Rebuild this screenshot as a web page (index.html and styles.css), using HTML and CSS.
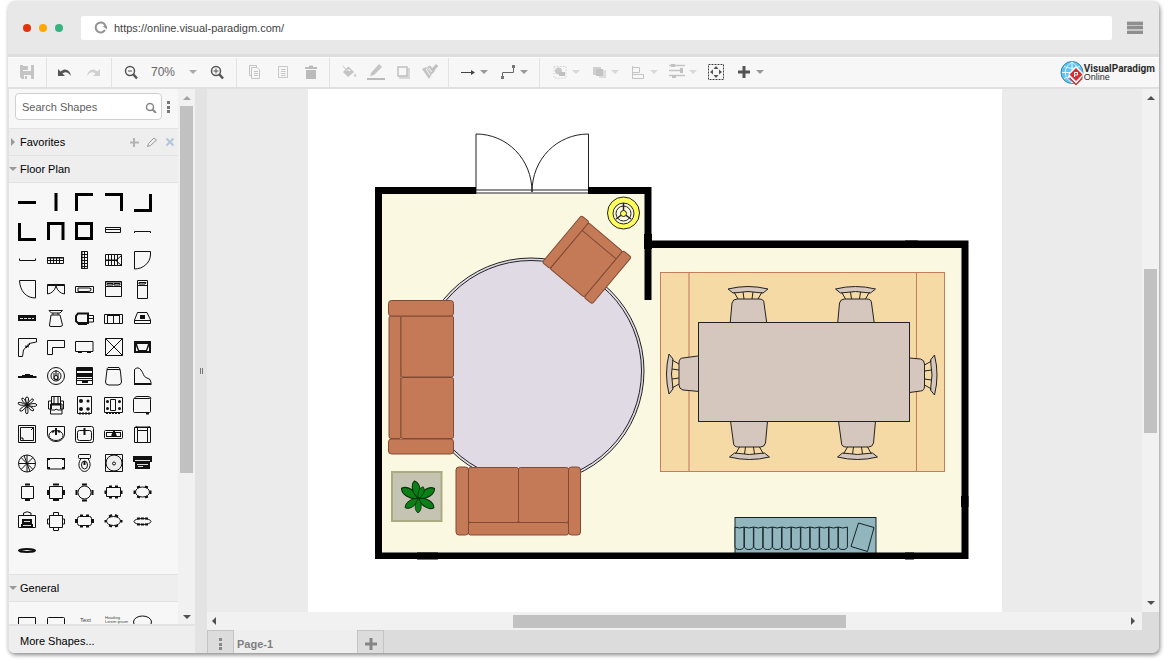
FILE: index.html
```
<!DOCTYPE html>
<html lang="en">
<head>
    <meta charset="utf-8">
    <title>Floor Plan - Visual Paradigm Online</title>
    <link rel="stylesheet" href="styles.css">
</head>
<body>
<div class="window">
    <header class="browser-bar">
        <div class="dots"><span class="dot red"></span><span class="dot yellow"></span><span class="dot green"></span></div>
        <div class="address">
            <button class="plain" aria-label="Reload">
                <svg width="13" height="13" viewBox="0 0 13 13"><path d="M11.500 5A5 5 0 1 0 11 9" fill="none" stroke="#949494" stroke-width="2"/><path d="M8.500 5H13V8.500z" fill="#949494"/></svg>
            </button>
            <input class="url" type="text" aria-label="Address" value="https://online.visual-paradigm.com/">
        </div>
        <button class="plain" aria-label="Menu">
            <svg width="16" height="13" viewBox="0 0 16 13"><path d="M0 0H16V13H0z" fill="#c6c6c6"/><path d="M0 1H16V4H0zM0 5H16V8H0zM0 10H16V13H0z" fill="#8e8e8e"/></svg>
        </button>
    </header>

    <div class="toolbar">
        <div class="group">
            <button class="tool" aria-label="Save"><svg width="16" height="16" viewBox="0 0 16 16"><path d="M1 1H15V15H3L1 13z" fill="#c4c4c4"/><path d="M4 1H12V7H4zM5 11H12V15H5z" fill="#f7f7f7"/><path d="M4 2H9V6H4zM6 12H8V15H6z" fill="#c4c4c4"/></svg></button>
        </div>
        <div class="group tight">
            <button class="tool" aria-label="Undo"><svg width="16" height="16" viewBox="0 0 16 16"><path d="M1 5V12H8L5.500 9.500Q10 6 14 12Q13 5 7 5.500L3.500 7.500z" fill="#555"/></svg></button>
            <button class="tool" aria-label="Redo"><svg width="16" height="16" viewBox="0 0 16 16"><path d="M15 5V12H8L10.500 9.500Q6 6 2 12Q3 5 9 5.500L12.500 7.500z" fill="#d0d0d0"/></svg></button>
        </div>
        <div class="group">
            <button class="tool" aria-label="Zoom out"><svg width="16" height="16" viewBox="0 0 16 16"><circle cx="7" cy="7" r="4.500" fill="none" stroke="#555" stroke-width="1.500"/><path d="M10 10L14 14.500" stroke="#555" stroke-width="2.500"/><path d="M5 7H9" stroke="#555"/></svg></button>
            <label class="zoom"><select aria-label="Zoom level"><option>70%</option><option>100%</option></select><span class="caret"></span></label>
            <button class="tool" aria-label="Zoom in"><svg width="16" height="16" viewBox="0 0 16 16"><circle cx="7" cy="7" r="4.500" fill="none" stroke="#555" stroke-width="1.500"/><path d="M10 10L14 14.500" stroke="#555" stroke-width="2.500"/><path d="M4.500 7H9.500M7 4.500V9.500" stroke="#555"/></svg></button>
        </div>
        <div class="group tight">
            <button class="tool" aria-label="Copy"><svg width="16" height="16" viewBox="0 0 16 16" fill="none" stroke="#c4c4c4"><path d="M4.500 11.500H2.500V1.500H9.500V3M4.500 3.500H10L12.500 6V14.500H4.500zM7 7.500H11M7 9.500H11M7 11.500H11"/></svg></button>
            <button class="tool" aria-label="Paste"><svg width="16" height="16" viewBox="0 0 16 16" fill="none" stroke="#c8c8c8"><path d="M3.500 2.500H12.500V13.500H3.500zM6 5.500H10.500M6 7.500H10.500M6 9.500H10.500M6 11.500H10.500"/></svg></button>
            <button class="tool" aria-label="Delete"><svg width="16" height="16" viewBox="0 0 16 16" fill="#bbb"><path d="M2 3H6V1.500H10V3H14V5H2zM3 6H13V15H3z"/></svg></button>
        </div>
        <div class="group narrow">
            <button class="tool" aria-label="Fill colour"><svg width="16" height="16" viewBox="0 0 16 16"><path d="M2 8L7.500 2.500L13 8L7 13z" fill="#c4c4c4"/><path d="M5 7L7.500 4.500L10 7z" fill="#f7f7f7"/><path d="M1.500 2L6 6M7 3V7" stroke="#c4c4c4" fill="none"/><path d="M14 9Q17 13 14 13Q11.500 13 14 9z" fill="#d4d4d4"/></svg></button>
            <button class="tool" aria-label="Line colour"><svg width="18" height="18" viewBox="0 0 18 18"><path d="M4 10L12 1L15 4L7 12L3 13z" fill="#c4c4c4"/><path d="M0 15H18V17H0z" fill="#bbb"/></svg></button>
            <button class="tool" aria-label="Shadow"><svg width="16" height="16" viewBox="0 0 16 16"><path d="M4 4H15V15H4z" fill="#d8d8d8"/><path d="M3 3H12V12H3z" fill="#f7f7f7" stroke="#c0c0c0" stroke-width="1.500"/></svg></button>
            <button class="tool" aria-label="Copy style"><svg width="16" height="16" viewBox="0 0 16 16"><path d="M0 5L4 3L10 10L7 15zM5 3L8 1.500L13 7L10 10z" fill="#c4c4c4"/><path d="M9 8L15 1" stroke="#c0c0c0" stroke-width="3"/><path d="M4 5L8 11M7 4L10 8" stroke="#f7f7f7"/></svg></button>
        </div>
        <div class="group">
            <button class="tool split" aria-label="Connection"><svg width="16" height="16" viewBox="0 0 16 16"><path d="M1 8.500H13" stroke="#444"/><path d="M11 6L15 8.500L11 11z" fill="#444"/></svg><span class="caret dark"></span></button>
            <button class="tool split" aria-label="Waypoints"><svg width="16" height="16" viewBox="0 0 16 16"><path d="M2.500 13V8.500H13.500V3" fill="none" stroke="#666"/><path d="M1 12H4V15H1zM12 1H15V4H12z" fill="#777"/></svg><span class="caret dark"></span></button>
        </div>
        <div class="group last">
            <button class="tool split" aria-label="Group"><svg width="16" height="16" viewBox="0 0 16 16"><path d="M2 2.500H14V14H2z" fill="none" stroke="#d0d0d0" stroke-dasharray="1.500 1.500"/><circle cx="6.500" cy="7" r="3.500" fill="#c8c8c8"/><path d="M7 8H13V12H7z" fill="#c0c0c0"/></svg><span class="caret light"></span></button>
            <button class="tool split" aria-label="Arrange"><svg width="16" height="16" viewBox="0 0 16 16"><path d="M2 3H10V11H2z" fill="#d0d0d0"/><path d="M8 6H15V14H8z" fill="#dedede"/><path d="M5 5H12V12H5z" fill="#c4c4c4"/></svg><span class="caret light"></span></button>
            <button class="tool split" aria-label="Align"><svg width="16" height="16" viewBox="0 0 16 16" fill="none" stroke="#c4c4c4"><path d="M2.500 2V15M2.500 3.500H9.500V8.500H2.500M2.500 10.500H13.500V14.500H2.500"/></svg><span class="caret light"></span></button>
            <button class="tool split" aria-label="Distribute"><svg width="16" height="16" viewBox="0 0 16 16"><path d="M0 1.500H16M0 6.500H14M0 11.500H16" stroke="#c4c4c4" stroke-width="1.500"/><path d="M2 0H6V3H2zM11 4H14V9H11zM3 11H7V14H3z" fill="#c0c0c0"/></svg><span class="caret light"></span></button>
            <button class="tool" aria-label="Fit"><svg width="16" height="16" viewBox="0 0 16 16"><path d="M.5 .5H15.500V15.500H.5z" fill="none" stroke="#444" stroke-dasharray="2 1"/><path d="M8 2L10.500 5H5.500zM8 14L5.500 11H10.500zM2 8L5 5.500V10.500zM14 8L11 10.500V5.500z" fill="#555"/></svg></button>
            <button class="tool split" aria-label="Insert"><svg width="16" height="16" viewBox="0 0 16 16"><path d="M6.500 2H9.500V6.500H14V9.500H9.500V14H6.500V9.500H2V6.500H6.500z" fill="#555"/></svg><span class="caret dark"></span></button>
        </div>
        <a class="brand" href="#" aria-label="Visual Paradigm Online">
            <svg width="24" height="26" viewBox="0 0 24 26">
                <circle cx="12" cy="12.500" r="11" fill="#5cc3f2" stroke="#3a86a8"/>
                <path d="M12 2V23M2 12.500H22M12 2C3 8 3 17 12 23M12 2C21 8 21 17 12 23M4 6.500Q12 10 20 6.500M4 18.500Q12 15 20 18.500" fill="none" stroke="#e8f8ff"/>
                <path d="M16 6L24 14L16 25L8 17L9 13z" fill="#f7f7f7"/>
                <path d="M16 8L22.500 14.500L16 21L9.500 14.500zM9.500 17L16 23.500L22.500 17V19L16 25.500L9.500 19z" fill="#d22f35"/>
                <path d="M14.500 17V12.500H17.500V15H15" fill="none" stroke="#fff"/>
            </svg>
            <span class="brand-name"><b>VisualParadigm</b>Online</span>
        </a>
    </div>

    <div class="workspace">
        <aside class="sidebar">
            <div class="sidebar-main">
                <div class="panels">
                    <div class="search-row">
                        <div class="search">
                            <input type="text" aria-label="Search Shapes" placeholder="Search Shapes">
                            <svg width="12" height="12" viewBox="0 0 12 12"><circle cx="5" cy="6" r="3.500" fill="none" stroke="#888" stroke-width="1.500"/><path d="M7.500 8.500L11 12" stroke="#888" stroke-width="2"/></svg>
                        </div>
                        <button class="plain" aria-label="More options"><svg width="4" height="14" viewBox="0 0 4 14" fill="#777"><path d="M0 1H3V4H0zM0 6H3V9H0zM0 10H3V13H0z"/></svg></button>
                    </div>
                    <div class="section-row">
                        <button class="section"><span class="arrow-right"></span>Favorites</button>
                        <button class="plain" aria-label="Add"><svg width="10" height="10" viewBox="0 0 10 10"><path d="M5 1V10M1 5.500H10" stroke="#b4b4b4" stroke-width="2"/></svg></button>
                        <button class="plain" aria-label="Edit"><svg width="10" height="10" viewBox="0 0 10 10"><path d="M.5 9.500L1.500 6.500L7 1L9.500 3L3.500 8.500z" fill="none" stroke="#999"/></svg></button>
                        <button class="plain" aria-label="Remove"><svg width="10" height="10" viewBox="0 0 10 10"><path d="M1.500 1.500L8.500 8.500M8.500 1.500L1.500 8.500" stroke="#b3c5d9" stroke-width="2"/></svg></button>
                    </div>
                    <button class="section wide"><span class="arrow-down"></span>Floor Plan</button>
                    <div class="palette">
                        <!-- walls -->
                        <svg><path class="thick" d="M5 14.500H23"/></svg>
                        <svg><path class="thick" d="M14 5V23"/></svg>
                        <svg><path class="thick" d="M5.500 23V6.500H22"/></svg>
                        <svg><path class="thick" d="M5 6.500H21.500V23"/></svg>
                        <svg><path class="thick" d="M21.500 6V22.500H5"/></svg>
                        <svg><path class="thick" d="M6.500 6V22.500H23"/></svg>
                        <svg><path class="thick" d="M6.500 23V6.500H21V23"/></svg>
                        <svg><path class="thick" d="M5.500 6.500H20.500V21.500H5.500z"/></svg>
                        <svg><path d="M5.500 10.500H20.500V15.500H5.500zM5 12.500H21"/></svg>
                        <svg><path d="M5.500 16V14.500H21.500V16"/></svg>
                        <svg><path d="M6.500 12.500V14.500H22.500V12.500"/></svg>
                        <svg><path d="M5.500 11.500H21.500V17.500H5.500zM5 14.500H22M5 12H22M8.500 11V18M11.500 11V18M14.500 11V18M17.500 11V18"/></svg>
                        <svg><path d="M10.500 5.500H16.500V22.500H10.500zM13.500 5V23M11 5V23M10 8.500H17M10 11.500H17M10 14.500H17M10 17.500H17M10 20.500H17"/></svg>
                        <svg><path d="M5.500 8.500H21.500V19.500H5.500zM5 14.500H18M8.500 8V20M11.500 8V20M14.500 8V20M17.500 8V20M22 9L16 14.500L22 20M5 14H17"/></svg>
                        <svg><path d="M5.500 23V5.500H21.500V9C21 17 14 23 5.500 23z"/></svg>
                        <svg><path d="M6.500 5.500H22.500V23C13 23 7 16 6.500 5.500z"/></svg>
                        <svg><path d="M5.500 11V9.500H22.500V19Q16 18 14 11Q12 18 5.500 19V10M5 10.500H23"/></svg>
                        <svg><path d="M4.500 11.500H22.500V17.500H4.500zM7 13H18Q21 13 20 15Q20 16.500 17 16.500H7z"/></svg>
                        <svg><path d="M5.500 6.500H21.500V21.500H5.500zM5 11.500H22M7 8.500H13V10H7zM14 8.500H20V10H14zM5 7H22"/></svg>
                        <svg><path d="M8.500 5.500H18.500V23.500H8.500zM8 10.500H19M10 7.500H17L16 9H10z"/></svg>
                        <svg><path class="solid" d="M5 11H23V17H5z"/><path class="gap" d="M7 14.500H21" stroke-dasharray="3 1"/></svg>
                        <svg><path d="M7 6.500H20.500L18 9H9.500zM9 11H18L20.500 21Q20.500 22.500 18 22.500H9Q7 22.500 7.500 21zM11 9V11M16 9V11"/></svg>
                        <svg><path class="mid" d="M7 9.500H17V19H7L5 17V12z"/><path d="M17 11.500H22.500V18H17M18 14.500H23M7 20.500H16"/></svg>
                        <svg><path d="M4.500 10.500H22.500V19.500H4.500zM7.500 10V19M19.500 10V19M13.500 12V19M7 11.500H20"/></svg>
                        <svg><path d="M8.500 8.500H18L21.500 16V19.500H5.500V16zM5 16.500H22"/><path class="solid" d="M11 11H16V15H11z"/></svg>
                        <svg><path d="M5.500 5.500H23.500V9L16 10.500L10.500 17L9.500 23.500H5.500zM13 15L17 11M12 13L16 14"/></svg>
                        <svg><path d="M5.500 7.500H22.500V14.500H10.500V21.500H5.500z"/></svg>
                        <svg><path d="M4.500 8.500H22V18.500H4.500z"/><path class="solid" d="M7 18H11V20H7zM16 18H20V20H16z"/></svg>
                        <svg><path d="M5.500 5.500H22.500V22.500H5.500zM5.500 5.500L22.500 22.500M22.500 5.500L5.500 22.500"/></svg>
                        <svg><path class="solid" d="M5 8H22V20H5z"/><path class="fillw" d="M8 11H19L17 17H10zM7 13L9 18H7zM20 13V18H18z"/></svg>
                        <!-- furniture -->
                        <svg><path class="mid" d="M5 15H23.500"/><path d="M9 13.500H20M12 12.500H17"/></svg>
                        <svg><circle cx="14" cy="14" r="8.500"/><circle cx="14" cy="14" r="5"/><circle cx="14" cy="15.500" r="2"/><path d="M14 8V14M12 11V17L16 18V11"/></svg>
                        <svg><path d="M5.500 5.500H21.500V22.500H5.500zM5 16.500H22M5 18.500H22"/><path class="solid" d="M5 6H22V9H5zM5 11H22V15H5zM11 19H17V21H11z"/></svg>
                        <svg><path d="M8 5.500H19Q20 6 20.500 10L21.500 20Q21 23 18 23H9Q5.500 23 5.500 20L7 8Q7 6 8 5.500zM7 7.500H20"/></svg>
                        <svg><path d="M5.500 23V7.500Q9 4 12 8C15 12 14 14 17 15.500Q22.500 17 22 20.500V23"/><path class="mid" d="M5 22H22"/></svg>
                        <svg><path d="M14 14Q11 6 14 6Q17 6 14 14Q18 7 20 8Q22 10 14 14Q23 11 24 14Q22 17 14 14Q23 18 20 20Q17 20 14 14Q16 22 14 23Q11 22 14 14Q10 21 7 20Q6 17 14 14Q5 15 5 12Q6 10 14 14Q8 10 9 7Q12 7 14 14"/></svg>
                        <svg><path d="M9.500 5.500H18.500V13H9.500zM12 5V13M16 5V13M6.500 10H9.500V18H6.500zM18.500 10H21.500V18H18.500zM8.500 13H20V23H8.500zM9 19H13L14 18L16 19H20"/><path class="mid" d="M9 13.500H19"/></svg>
                        <svg><path d="M6.500 5.500H20.500V22.500H6.500z"/><g class="solid"><circle cx="10" cy="10" r="2"/><circle cx="17" cy="10" r="1.500"/><circle cx="10" cy="18" r="2"/><circle cx="17" cy="18" r="1.800"/></g><path class="mid" d="M8 22.500H20" stroke-dasharray="2 1"/></svg>
                        <svg><path d="M4.500 6.500H22.500V21.500H4.500zM10.500 8.500H15.500V19.500H10.500z"/><g class="solid"><circle cx="7.500" cy="10.500" r="1.500"/><circle cx="19.500" cy="10.500" r="1.500"/><circle cx="7.500" cy="17.500" r="1.500"/><circle cx="19.500" cy="17.500" r="1.500"/></g><path class="mid" d="M6 22H21" stroke-dasharray="2 1"/></svg>
                        <svg><rect x="4.500" y="7.500" width="17" height="14" rx="1"/><path d="M5 8Q6 5.500 8 5.500H19Q22 5.500 22 8"/><path class="mid" d="M17 22.500H20"/></svg>
                        <!-- bathroom and kitchen -->
                        <svg><path d="M5.500 5.500H22.500V22.500H5.500zM7.500 7.500H20.500V20.500H7.500zM18 10L21 7M8 18H10V20"/></svg>
                        <svg><path d="M5.500 6.500H22.500V14C22 24 6 24 5.500 14z"/><ellipse cx="14" cy="15.500" rx="7" ry="5"/><path class="mid" d="M14 8V15M10 12L12 11M18 12L16 11"/></svg>
                        <svg><rect x="4.500" y="6.500" width="18" height="16" rx="2"/><rect x="6.500" y="10.500" width="14" height="10" rx="2"/><path class="mid" d="M13.500 8V15"/></svg>
                        <svg><rect x="4.500" y="10.500" width="18" height="8" rx="1"/><rect x="6.500" y="12.500" width="14" height="4"/><path class="mid" d="M14 10V16M12 16L14 12L16 16"/></svg>
                        <svg><path d="M5.500 7.500H21.500V22.500H5.500zM8.500 10.500H18.500V22M8.500 7V22M18.500 7V22M5.500 8Q7 5.500 9 7H19Q21 5.500 21.500 8"/></svg>
                        <svg><circle cx="14" cy="14.500" r="8.500"/><path d="M14 6V23M5.500 14.500H22.500M8 8.500L20 20.500M20 8.500L8 20.500M11 6.500L17 22.500"/></svg>
                        <svg><path d="M5.500 9.500H22.500V20H5.500z"/><path class="solid" d="M5 9H8V11H5zM20 9H23V11H20zM5 18H8V20H5zM20 18H23V20H20z"/></svg>
                        <svg><rect x="7.500" y="5.500" width="12" height="4" rx="1"/><path d="M10 9.500C5 17 10 22.500 13.500 22.500C17 22.500 22 17 17 9.500"/><ellipse cx="13.500" cy="16" rx="3" ry="4"/><path class="mid" d="M13.500 12V16"/></svg>
                        <svg><path d="M5.500 5.500H22.500V22.500H5.500z"/><circle cx="14" cy="14" r="8" fill="#eee"/><circle cx="14" cy="14.500" r="1.500"/></svg>
                        <svg><path class="solid" d="M4 7H23V13H21V20H6V13H4z"/><path class="gap" d="M6 11.500H21M8 15.500H19M9 17.500H14"/></svg>
                        <!-- tables -->
                        <svg><path d="M8.500 8.500H20.500V20.500H8.500z"/><path class="mid" d="M12 6.500H17M12 22H17"/></svg>
                        <svg><path d="M7.500 8.500H20.500V20.500H7.500z"/><path class="mid" d="M11 6.500H17M11 22H17M6 12V17M22 12V17"/></svg>
                        <svg><circle cx="13.500" cy="14.500" r="6.500"/><path class="mid" d="M11 6.500H16M11 22.500H16M5.500 12V17M21.500 12V17"/></svg>
                        <svg><path d="M6.500 9.500H20.500V18.500H6.500z"/><path class="mid" d="M9 8.500H12M15 8.500H18M9 19.500H12M15 19.500H18M5.500 12.500V16M21.500 12.500V16"/></svg>
                        <svg><ellipse cx="13.500" cy="14" rx="7" ry="5"/><path class="mid" d="M8 9.500L11 8.500M16 8.500L19 9.500M8 18.500L11 19.500M16 19.500L19 18.500M5.500 12.500V16M21.500 12.500V16"/></svg>
                        <svg><path d="M5.500 8.500H22.500V20.500H5.500zM10.500 8.500V6Q14 3.500 18 6V8.500"/><path class="solid" d="M9 12H19V17H20V21H8V17H9z"/><path class="gap" d="M11 14.500H17M10 18.500H18"/></svg>
                        <svg><path d="M7.500 8.500H20.500V20.500H7.500zM11.500 8V5.500H16.500V8M11.500 21V23.500H16.500V21M7 12H5.500V17H7M21 12H22.500V17H21"/></svg>
                        <svg><rect x="6.500" y="9.500" width="14" height="9" rx="2"/><path class="mid" d="M9 8.500H12M15 8.500H18M9 19.500H12M15 19.500H18M5 12V16M22 12V16"/></svg>
                        <svg><ellipse cx="13.500" cy="14" rx="7" ry="4.500"/><path class="mid" d="M9 9.500L12 8M15 8L18 9.500M9 18.500L12 19.500M15 19.500L18 18.500M5.500 13V15.500M21.500 13V15.500"/></svg>
                        <svg><ellipse cx="13.500" cy="14.500" rx="8.500" ry="3"/><path class="mid" d="M8 11.500L19 11.500M8 17.500L19 17.500" stroke-dasharray="3 1"/></svg>
                        <svg><ellipse class="mid" cx="14" cy="14.500" rx="8" ry="1.500"/></svg>
                    </div>
                    <button class="section wide"><span class="arrow-down"></span>General</button>
                    <div class="palette general">
                        <svg><path d="M5.500 10.500H22.500V22H5.500z"/></svg>
                        <svg><rect x="5.500" y="10.500" width="17" height="12" rx="1"/></svg>
                        <span class="mini">Text</span>
                        <span class="mini heading">Heading<br>Lorem ipsum</span>
                        <svg><ellipse cx="13.500" cy="15" rx="9" ry="6"/></svg>
                    </div>
                </div>
                <div class="vbar">
                    <span class="up"></span>
                    <span class="track"><span class="thumb side-thumb"></span><span class="side-rest"></span></span>
                    <span class="down"></span>
                </div>
            </div>
            <button class="more">More Shapes...</button>
        </aside>
        <div class="splitter"><svg width="4" height="6" viewBox="0 0 4 6"><path d="M1.500 0V6M3.500 0V6" stroke="#777"/></svg></div>
        <main class="editor">
            <div class="canvas-row">
                <div class="canvas">
                    <svg class="sheet" viewBox="308 89 694 523" role="img" aria-label="Floor plan drawing">
                        <defs>
                            <g id="chair" stroke="#222">
                                <path d="M-20 -34Q0 -39 20 -34L15 -30Q0 -33 -15 -30z"/>
                                <path d="M-14 -31L-10 -24M-5 -31L-4 -24M5 -31L4 -24M14 -31L10 -24" fill="none"/>
                                <path d="M-18 2L-16 -20Q-15 -24 -11 -24H11Q16 -24 16 -20L19 2z"/>
                            </g>
                            <path id="leaf" d="M0 0C-5 -6 -5 -15 0 -18C5 -15 5 -6 0 0z"/>
                            <path id="book" d="M0 0Q4.500 2 9 0V19Q9 22.500 4.500 22.500Q0 22.500 0 19z"/>
                        </defs>
                        <path d="M378 190H648V244H965V556H378z" fill="#fbf8e2"/>
                        <!-- double door -->
                        <path d="M476 189H588V193.500H476z" fill="#fff"/>
                        <path d="M476 193.500V134C507 134 532 159 532 192C532 159 557 134 588.500 134V193.500M476 190H588M476 193H588" fill="none" stroke="#222"/>
                        <!-- round rug -->
                        <circle cx="531" cy="371" r="113" fill="#dfdae4" stroke="#222"/>
                        <circle cx="531" cy="371" r="110.500" fill="none" stroke="#222"/>
                        <!-- lamp -->
                        <g stroke="#222">
                            <circle cx="623.500" cy="213" r="16" fill="#ffff5c"/>
                            <circle cx="623.500" cy="213.500" r="10.500" fill="#fbf8e2"/>
                            <circle cx="623.500" cy="213.500" r="7.500" fill="#fbf8e2"/>
                            <path d="M623.500 213.500V203M623.500 213.500L616 219M623.500 213.500L631 219" stroke-width="1.500"/>
                            <circle cx="623.500" cy="213.500" r="3" fill="#ffff5c"/>
                        </g>
                        <!-- sofas and armchair -->
                        <g fill="#c47a57" stroke="#804a34">
                            <rect x="389" y="316" width="12" height="122.500" rx="2"/>
                            <rect x="401" y="316" width="52.500" height="61" rx="2"/>
                            <rect x="401" y="377.500" width="52.500" height="61" rx="2"/>
                            <rect x="388.500" y="300.500" width="65" height="15.500" rx="3"/>
                            <rect x="388.500" y="439" width="65" height="15" rx="3"/>
                            <rect x="468.500" y="522.500" width="100" height="12.500" rx="2"/>
                            <rect x="468.500" y="467.500" width="50" height="55" rx="2"/>
                            <rect x="518.500" y="467.500" width="50" height="55" rx="2"/>
                            <rect x="456" y="467" width="12.500" height="68" rx="3"/>
                            <rect x="568.500" y="467" width="12" height="68" rx="3"/>
                            <g transform="translate(581.500 215.500) rotate(40)">
                                <rect x="10" y="1" width="44.500" height="60" rx="2"/>
                                <path d="M10 11H54.500"/>
                                <rect width="10" height="61" rx="2"/>
                                <rect x="54.500" width="10.500" height="61" rx="2"/>
                            </g>
                        </g>
                        <!-- plant -->
                        <rect x="392" y="472" width="49.500" height="49" fill="#c5c3b1" stroke="#abaa80" stroke-width="2"/>
                        <g fill="#0b8016" stroke="#082d0a" transform="translate(418.500 498.500)">
                            <use href="#leaf" transform="rotate(-59) scale(1.100)"/>
                            <use href="#leaf" transform="rotate(-13)"/>
                            <use href="#leaf" transform="rotate(58) scale(1.050)"/>
                            <use href="#leaf" transform="rotate(121)"/>
                            <use href="#leaf" transform="rotate(235) scale(.9)"/>
                            <use href="#leaf" transform="rotate(182) scale(.8)"/>
                            <use href="#leaf" transform="rotate(22) scale(.7)"/>
                        </g>
                        <!-- dining set -->
                        <rect x="660.500" y="272.500" width="284" height="199" fill="#f6daa6" stroke="#c37c5c"/>
                        <path d="M689 273V471" stroke="#dba781" stroke-width="2"/>
                        <path d="M916.500 273V471" stroke="#c37c5c"/>
                        <g fill="#d5c7bd">
                            <use href="#chair" transform="translate(748 323)"/>
                            <use href="#chair" transform="translate(855.500 323)"/>
                            <use href="#chair" transform="translate(749.500 423) rotate(180)"/>
                            <use href="#chair" transform="translate(857.500 423) rotate(180)"/>
                            <use href="#chair" transform="translate(703 374) rotate(-90)"/>
                            <use href="#chair" transform="translate(900.500 375) rotate(90)"/>
                            <rect x="698.500" y="322.500" width="211" height="99" stroke="#222"/>
                        </g>
                        <!-- bookshelf -->
                        <g fill="#92b6be" stroke="#172226">
                            <rect x="735" y="517.500" width="141" height="36"/>
                            <use href="#book" x="735" y="527"/><use href="#book" x="744.400" y="527"/><use href="#book" x="753.800" y="527"/>
                            <use href="#book" x="763.200" y="527"/><use href="#book" x="772.600" y="527"/><use href="#book" x="782" y="527"/>
                            <use href="#book" x="791.400" y="527"/><use href="#book" x="800.800" y="527"/><use href="#book" x="810.200" y="527"/>
                            <use href="#book" x="819.600" y="527"/><use href="#book" x="829" y="527"/><use href="#book" x="838.400" y="527"/>
                            <path d="M858.500 523L874 527.500L867.500 551.500L851 546.500z"/>
                        </g>
                        <!-- walls -->
                        <path d="M375 187H476V194H382V552.500H961.500V248H651.500V300H644.500V194H588V187H651.500V240.500H968.500V559H375z"/>
                        <path d="M644 234H652V249H644zM905 240.500H918V248H905zM417 552.500H438V559.500H417zM905 552.500H914V559.500H905zM961 496H968.500V507H961z"/>
                    </svg>
                </div>
                <div class="vbar">
                    <span class="up"></span>
                    <span class="track"><span class="rest"></span><span class="thumb main-thumb"></span><span class="rest"></span></span>
                    <span class="down"></span>
                </div>
            </div>
            <div class="hbar">
                <span class="left"></span>
                <span class="htrack"><span class="before"></span><span class="thumb"></span><span class="after"></span></span>
                <span class="right"></span>
                <span class="corner"></span>
            </div>
            <div class="tabs">
                <button class="tab-tool" aria-label="Pages"><svg width="4" height="14" viewBox="0 0 4 14" fill="#888"><path d="M0 1H3V4H0zM0 6H3V9H0zM0 10H3V13H0z"/></svg></button>
                <button class="tab">Page-1</button>
                <button class="tab-tool" aria-label="Insert page"><svg width="12" height="12" viewBox="0 0 12 12"><path d="M4.500 0H7.500V4.500H12V7.500H7.500V12H4.500V7.500H0V4.500H4.500z" fill="#858585"/></svg></button>
            </div>
        </main>
    </div>
</div>
</body>
</html>
```
FILE: styles.css
```
* {
    box-sizing: border-box;
}
body {
    margin: 0;
    padding: 1px 11px 12px 8px;
    height: 100vh;
    background-color: white;
    font-family: "Liberation Sans", Arial, sans-serif;
    font-size: 11px;
    color: #000;
}
button, input, select {
    font: inherit;
    color: inherit;
    margin: 0;
    padding: 0;
    border: 0;
    background: none;
}
svg {
    display: block;
    flex: none;
}
.window {
    display: flex;
    flex-direction: column;
    height: 100%;
    overflow: hidden;
    border-radius: 7px;
    background-color: #e8e8e8;
    box-shadow: 1px 2px 4px #888;
}

/* browser bar */
.browser-bar {
    display: flex;
    align-items: center;
    height: 56px;
    flex: none;
    padding: 0 16px 0 15px;
    border-bottom: 3px solid #dedede;
}
.dots {
    display: flex;
    gap: 8px;
    margin-right: 18px;
}
.dot {
    width: 8px;
    height: 8px;
    border-radius: 50%;
}
.red { background-color: #e1330c; }
.yellow { background-color: #ffa900; }
.green { background-color: #36b37e; }
.address {
    display: flex;
    align-items: center;
    flex: 1;
    gap: 7px;
    height: 24px;
    margin-right: 15px;
    padding-left: 13px;
    border-radius: 2px;
    background-color: white;
}
.url {
    flex: 1;
    color: #444;
}

/* toolbar */
.toolbar {
    display: flex;
    height: 32px;
    flex: none;
    border-top: 1px solid white;
    border-bottom: 2px solid #e0e0e0;
    background-color: #f7f7f7;
}
.group {
    display: flex;
    align-items: center;
    justify-content: center;
    padding: 0 5px 2px;
    border-right: 1px solid #e2e2e2;
}
.group.tight {
    padding: 0 4px 2px;
}
.group.narrow .tool {
    width: 27px;
}
.group.last {
    flex: 1;
    justify-content: flex-start;
    padding-left: 6px;
    border-right: 0;
}
.tool {
    display: flex;
    align-items: center;
    justify-content: center;
    width: 28px;
    height: 26px;
}
.tool.split {
    width: 40px;
    gap: 4px;
}
.group.last .split {
    width: 39px;
}
.caret {
    border: 4px solid transparent;
    border-top-color: #aaa;
    border-bottom: 0;
}
.caret.dark { border-top-color: #999; }
.caret.light { border-top-color: #d8d8d8; }
.zoom {
    display: flex;
    align-items: center;
    width: 58px;
    padding-left: 6px;
    gap: 14px;
    font-size: 12px;
    color: #666;
}
.zoom select {
    width: 24px;
    appearance: none;
}
.brand {
    display: flex;
    align-items: center;
    padding-right: 4px;
    color: #2d2d2d;
    text-decoration: none;
}
.brand-name {
    display: flex;
    flex-direction: column;
    font-size: 9px;
    line-height: 9px;
}
.brand-name b {
    font-family: Roboto, sans-serif;
    font-size: 10px;
}

/* sidebar */
.workspace {
    display: flex;
    flex: 1;
    min-height: 0;
}
.sidebar {
    display: flex;
    flex-direction: column;
    width: 187px;
    flex: none;
    border-left: 1px solid #e2e2e2;
    background-color: #f7f7f7;
}
.sidebar-main {
    display: flex;
    flex: 1;
    min-height: 0;
}
.panels {
    flex: 1;
    overflow: hidden;
}
.plain {
    display: flex;
    align-items: center;
}
.search-row {
    display: flex;
    align-items: center;
    gap: 5px;
    height: 39px;
    padding: 0 0 4px 6px;
}
.search {
    display: flex;
    align-items: center;
    width: 147px;
    height: 27px;
    padding: 0 4px 0 6px;
    border: 1px solid #d0d0d0;
    border-radius: 4px;
    background-color: white;
}
.search input {
    flex: 1;
    min-width: 0;
}
.search input::placeholder {
    color: #606060;
}
.section-row {
    display: flex;
    gap: 8px;
    height: 27px;
    padding-right: 3px;
    border-top: 1px solid #e2e2e2;
    background-color: #eee;
}
.section {
    display: flex;
    align-items: center;
    flex: 1;
}
.section.wide {
    width: 100%;
    height: 28px;
    border-top: 1px solid #e2e2e2;
    border-bottom: 1px solid #e2e2e2;
    background-color: #eee;
}
.arrow-right {
    margin: 0 5px 0 2px;
    border: 4px solid transparent;
    border-left-color: #999;
    border-right: 0;
}
.arrow-down {
    margin: 0 3px 0 0;
    border: 4px solid transparent;
    border-top-color: #999;
    border-bottom: 0;
}
.palette {
    display: grid;
    grid-template-columns: repeat(5, 29px);
    padding: 5px 0 9px 4px;
}
.palette svg {
    width: 29px;
    height: 29px;
    fill: none;
    stroke: #111;
}
.palette .thick { stroke-width: 3; stroke: #000; }
.palette .mid { stroke-width: 2; }
.palette .solid { fill: #111; stroke: none; }
.palette .gap { stroke: #ddd; }
.palette .fillw { fill: #f7f7f7; stroke: none; }
.palette.general {
    padding: 5px 0 0 4px;
}
.mini {
    padding-top: 10px;
    font-size: 6px;
    line-height: 7px;
    text-align: center;
    color: #444;
}
.heading {
    padding: 9px 0 0 5px;
    font-size: 4px;
    line-height: 4px;
    text-align: left;
}
.more {
    height: 29px;
    flex: none;
    padding-left: 11px;
    padding-top: 2px;
    border-top: 2px solid #e2e2e2;
    background-color: #eee;
    text-align: left;
}
.splitter {
    display: flex;
    align-items: center;
    justify-content: center;
    width: 12px;
    flex: none;
    background-color: #e3e3e3;
}

/* scroll bars */
.vbar {
    display: flex;
    flex-direction: column;
    align-items: center;
    width: 17px;
    flex: none;
    background-color: #f1f1f1;
}
.up, .down {
    border: 4px solid transparent;
    flex: none;
}
.up {
    margin: 7px 0 6px;
    border-bottom-color: #505050;
    border-top-width: 0;
}
.sidebar .up {
    border-bottom-color: #a3a3a3;
}
.down {
    margin: 5px 0;
    border-top-color: #505050;
    border-bottom-width: 0;
}
.canvas-row .down {
    margin-bottom: 7px;
}
.track {
    display: flex;
    flex-direction: column;
    flex: 1;
    width: 13px;
}
.thumb { background-color: #c1c1c1; }
.side-thumb { flex: 368; }
.side-rest { flex: 138; }
.main-thumb, .rest { flex: 1; }
.hbar {
    display: flex;
    align-items: center;
    height: 18px;
    flex: none;
    background-color: #f1f1f1;
}
.left, .right {
    border: 4px solid transparent;
}
.left {
    margin: 0 5px;
    border-right-color: #505050;
    border-left-width: 0;
}
.right {
    margin: 0 5px 0 2px;
    border-left-color: #505050;
    border-right-width: 0;
}
.htrack {
    display: flex;
    flex: 1;
    height: 13px;
}
.htrack .before { flex: 292; }
.htrack .thumb { flex: 332; }
.htrack .after { flex: 283; }
.corner {
    align-self: stretch;
    width: 17px;
    margin-left: 2px;
    background-color: #dcdcdc;
}

/* editor */
.editor {
    display: flex;
    flex-direction: column;
    flex: 1;
    min-width: 0;
}
.canvas-row {
    display: flex;
    flex: 1;
    min-height: 0;
}
.canvas {
    flex: 1;
    min-width: 0;
    padding: 0 140px 0 101px;
    background-color: #ebebeb;
}
.sheet {
    width: 100%;
    height: 100%;
    background-color: white;
}
.tabs {
    display: flex;
    height: 23px;
    flex: none;
    background-color: #dcdcdc;
}
.tab-tool {
    display: flex;
    align-items: center;
    justify-content: center;
    width: 27px;
    padding-top: 3px;
    border: 1px solid #c4c4c4;
    border-bottom: 0;
}
.tab {
    width: 123px;
    padding: 4px 0 0 3px;
    background-color: #eee;
    font-weight: bold;
    text-align: left;
    color: #808080;
}
```
